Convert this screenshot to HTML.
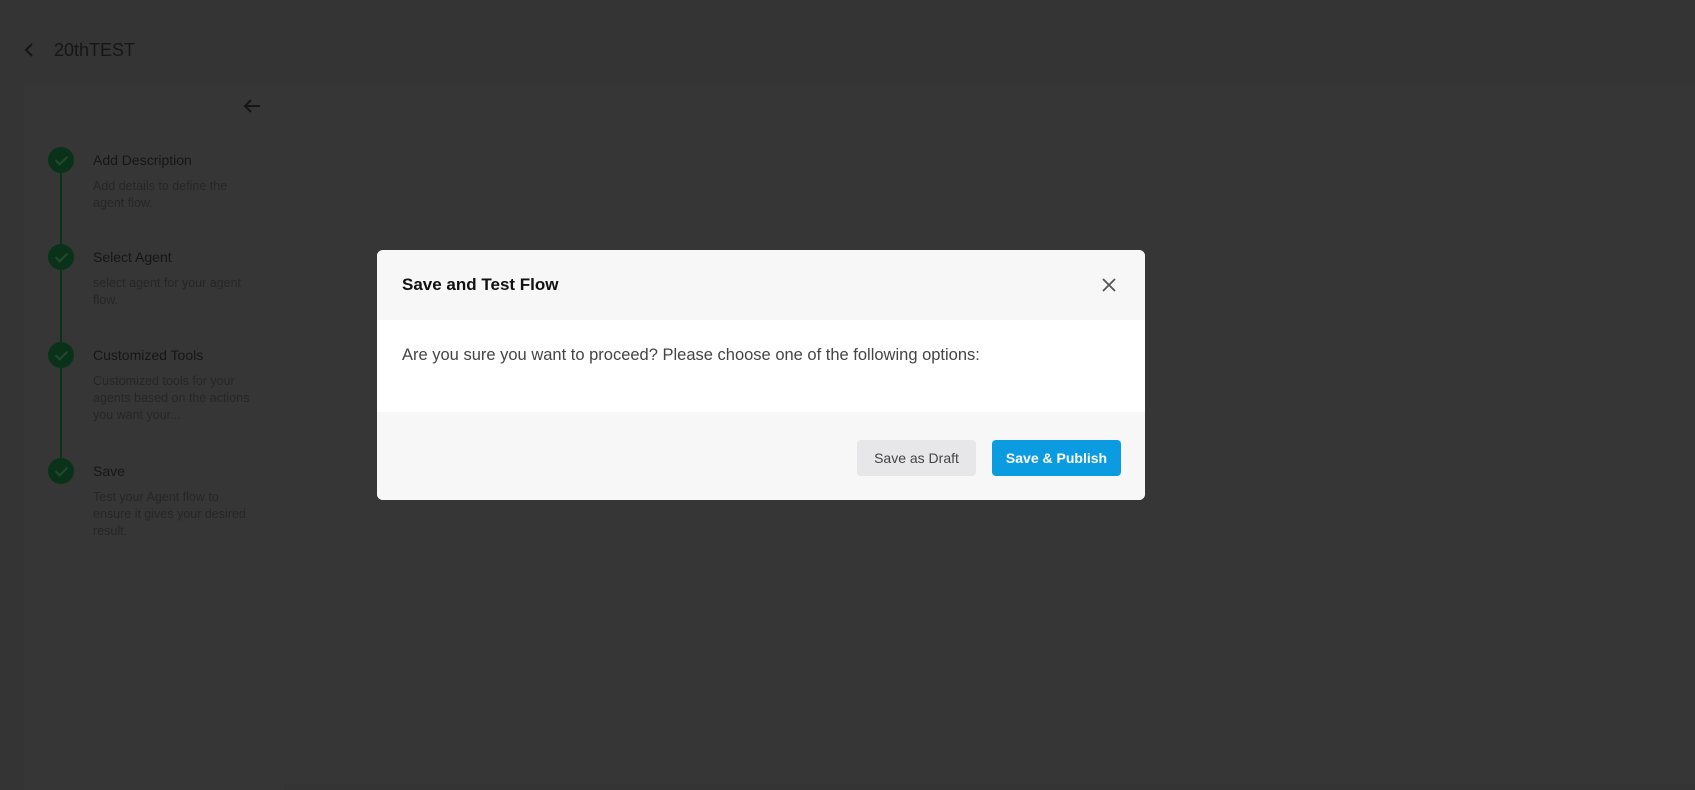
<!DOCTYPE html>
<html><head><style>
*{margin:0;padding:0;box-sizing:border-box}
body{width:1695px;height:790px;background:#343434;font-family:"Liberation Sans",sans-serif;position:relative;overflow:hidden}
.a{position:absolute}
.side{left:24px;top:86px;width:260px;height:704px;background:#363636}
.main{left:284px;top:86px;width:1411px;height:698px;background:#363636}
.st{color:#161616;font-size:14px}
.sd{color:#262626;font-size:12.5px;line-height:17px;width:158px}
.c{width:26px;height:26px;border-radius:50%;background:#0a321a;left:48px}
.c:after{content:"";position:absolute;left:10px;top:6px;width:5px;height:10px;border:solid #24482f;border-width:0 2px 2px 0;transform:rotate(45deg)}
.ln{left:60px;width:2px;background:#0a321a}
.modal{left:377px;top:250px;width:768px;height:250px;background:#fff;border-radius:6px;overflow:hidden}
.btn{position:absolute;top:190px;height:36px;border-radius:4px;font-size:14px;display:flex;align-items:center;justify-content:center}
</style></head><body>
<div class="a side"></div><div class="a main"></div>
<svg class="a" style="left:22px;top:42px" width="14" height="16" viewBox="0 0 14 16"><path d="M10 2 L4 8 L10 14" fill="none" stroke="#161616" stroke-width="2"/></svg>
<div class="a" style="left:54px;top:40px;font-size:18px;color:#161616">20thTEST</div>
<svg class="a" style="left:242px;top:97px" width="20" height="18" viewBox="0 0 20 18"><path d="M18 9 H3 M9 3 L3 9 L9 15" fill="none" stroke="#161616" stroke-width="2"/></svg>
<div class="a ln" style="top:173px;height:72px"></div>
<div class="a ln" style="top:270px;height:72px"></div>
<div class="a ln" style="top:368px;height:90px"></div>
<div class="a c" style="top:147px"></div>
<div class="a c" style="top:244px"></div>
<div class="a c" style="top:342px"></div>
<div class="a c" style="top:458px"></div>
<div class="a st" style="left:93px;top:152px">Add Description</div>
<div class="a sd" style="left:93px;top:178px">Add details to define the agent flow.</div>
<div class="a st" style="left:93px;top:249px">Select Agent</div>
<div class="a sd" style="left:93px;top:275px">select agent for your agent flow.</div>
<div class="a st" style="left:93px;top:347px">Customized Tools</div>
<div class="a sd" style="left:93px;top:373px">Customized tools for your agents based on the actions you want your...</div>
<div class="a st" style="left:93px;top:463px">Save</div>
<div class="a sd" style="left:93px;top:489px">Test your Agent flow to ensure it gives your desired result.</div>
<div class="a modal">
 <div class="a" style="left:0;top:0;width:768px;height:70px;background:#f7f7f8"></div>
 <div class="a" style="left:0;top:162px;width:768px;height:88px;background:#f7f7f8"></div>
 <div class="a" style="left:25px;top:25px;font-size:17px;font-weight:bold;color:#111">Save and Test Flow</div>
 <svg class="a" style="left:724px;top:27px" width="16" height="16" viewBox="0 0 16 16"><path d="M2 2 L14 14 M14 2 L2 14" stroke="#555" stroke-width="1.8"/></svg>
 <div class="a" style="left:25px;top:96px;font-size:16.5px;color:#444">Are you sure you want to proceed? Please choose one of the following options:</div>
 <div class="btn" style="left:480px;width:119px;background:#e7e7ea;color:#444">Save as Draft</div>
 <div class="btn" style="left:615px;width:129px;background:#0a9be0;color:#fff;font-weight:bold">Save &amp; Publish</div>
</div>
</body></html>
